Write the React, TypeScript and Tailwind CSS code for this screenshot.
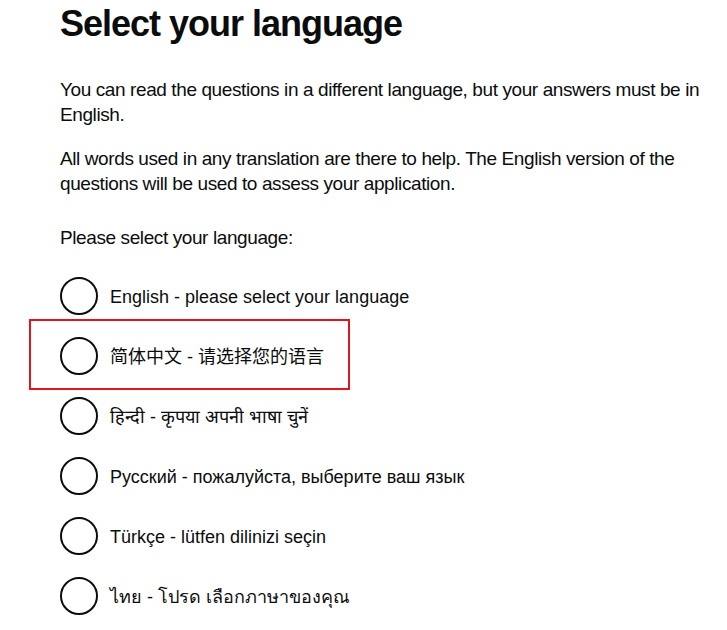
import React from 'react';

const languages = [
  'English - please select your language',
  '简体中文 - 请选择您的语言',
  'हिन्दी - कृपया अपनी भाषा चुनें',
  'Русский - пожалуйста, выберите ваш язык',
  'Türkçe - lütfen dilinizi seçin',
  'ไทย - โปรด เลือกภาษาของคุณ',
];

export default function App() {
  return (
    <div className="relative w-[727px] h-[630px] overflow-hidden bg-white text-[#0b0c0c] font-['Liberation_Sans','Noto_Sans_CJK_SC',sans-serif]">
      <div className="pl-[60px] pt-[2px]">
        <h1 className="text-[36px] leading-[44px] font-bold tracking-[-1px]">Select your language</h1>

        <div className="mt-[31px] text-[19px] leading-[25px] tracking-[-0.4px] w-[655px]">
          <p>You can read the questions in a different language, but your answers must be in English.</p>
          <p className="mt-[19px]">All words used in any translation are there to help. The English version of the questions will be used to assess your application.</p>
          <p className="mt-[29px]">Please select your language:</p>
        </div>

        {/* radios */}
        <div className="mt-[16px] flex flex-col">
          {languages.map((lang) => (
            <label key={lang} className="h-[60px] flex items-center gap-[12px]">
              <span className="w-[38px] h-[38px] rounded-full border-2 border-[#0b0c0c] shrink-0" />
              <span className="text-[18px] leading-[25px] pt-[3px]">{lang}</span>
            </label>
          ))}
        </div>
      </div>

      {/* highlight box */}
      <div className="absolute left-[29px] top-[319px] w-[321px] h-[71px] border-2 border-[#e3141c]" />
    </div>
  );
}
